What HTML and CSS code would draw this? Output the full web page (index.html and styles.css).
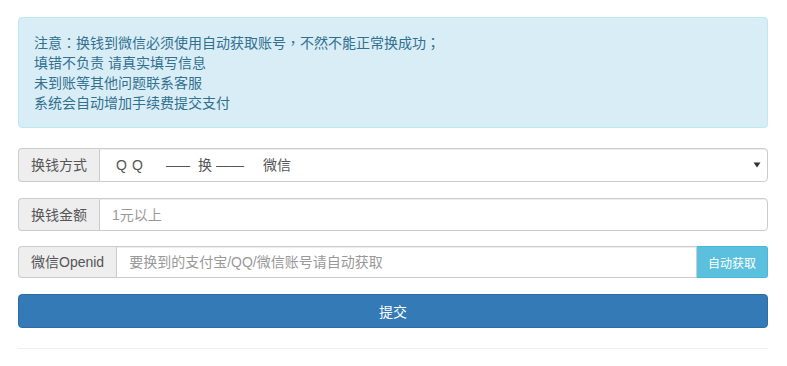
FILE: index.html
```html
<!DOCTYPE html>
<html lang="zh-CN">
<head>
<meta charset="utf-8">
<title>换钱</title>
<link rel="stylesheet" href="styles.css">
</head>
<body>
<div class="container">
  <div class="alert" lang="zh-TW">
    注意：换钱到微信必须使用自动获取账号，不然不能正常换成功；<br>
    填错不负责 请真实填写信息<br>
    未到账等其他问题联系客服<br>
    系统会自动增加手续费提交支付
  </div>

  <div class="group group-1">
    <span class="addon">换钱方式</span>
    <div class="control select">
      <span class="opt opt-qq">QQ</span>
      <span class="opt opt-dash">——</span>
      <span class="opt opt-huan">换</span>
      <span class="opt opt-dash2">——</span>
      <span class="opt opt-wx">微信</span>
      <svg class="caret" width="8" height="6" viewBox="0 0 8 6"><path d="M0.5 0.5 L7.5 0.5 L4 5.5 Z" fill="#333"/></svg>
    </div>
  </div>

  <div class="group group-2">
    <span class="addon">换钱金额</span>
    <input class="control" type="text" placeholder="1元以上">
  </div>

  <div class="group group-3">
    <span class="addon">微信Openid</span>
    <input class="control" type="text" placeholder="要换到的支付宝/QQ/微信账号请自动获取">
    <button class="btn-info" type="button">自动获取</button>
  </div>

  <button class="btn-primary" type="button">提交</button>

  <div class="rule"></div>
</div>
</body>
</html>
```

FILE: styles.css
```css
* { box-sizing: border-box; }

html, body {
  margin: 0;
  padding: 0;
  background: #fff;
}

body {
  font-family: "Liberation Sans", "Noto Sans CJK SC", sans-serif;
  font-size: 14px;
  line-height: 20px;
  color: #333;
}

.container {
  width: 750px;
  margin-left: 18px;
  padding-top: 17px;
}

.alert {
  background: #d9edf7;
  border: 1px solid #bce8f1;
  border-radius: 4px;
  color: #31708f;
  padding: 15px 15px 14px;
  margin-bottom: 20px;
  font-family: "Liberation Sans", "Noto Sans CJK TC", sans-serif;
}

.group {
  display: flex;
  align-items: stretch;
  height: 34px;
  margin-bottom: 16px;
}

.group-2 { height: 33px; margin-bottom: 15px; }
.group-3 { height: 32px; margin-bottom: 16px; }

.addon {
  display: flex;
  align-items: center;
  padding: 0 12px;
  background: #eee;
  border: 1px solid #ccc;
  border-right: 0;
  border-radius: 4px 0 0 4px;
  color: #555;
  font-size: 14px;
  white-space: nowrap;
}

.control {
  flex: 1;
  min-width: 0;
  border: 1px solid #ccc;
  border-radius: 0 4px 4px 0;
  padding: 0 12px;
  font-family: inherit;
  font-size: 14px;
  color: #555;
  background: #fff;
  box-shadow: inset 0 1px 1px rgba(0,0,0,.075);
  outline: none;
}

.control::placeholder { color: #999; }

.select {
  display: flex;
  align-items: center;
  position: relative;
  padding-left: 16px;
}

.opt {
  display: inline-block;
  white-space: nowrap;
  overflow: hidden;
}

.opt-qq { width: 50px; letter-spacing: 5px; }
.opt-dash { width: 32px; letter-spacing: -4px; }
.opt-huan { width: 18px; }
.opt-dash2 { width: 47px; }
.opt-wx { width: 40px; }

.caret {
  position: absolute;
  right: 6px;
  top: 13px;
}

.group-3 .control { border-radius: 0; }

.btn-info {
  background: #5bc0de;
  border: 1px solid #46b8da;
  border-left: 0;
  color: #fff;
  font-family: inherit;
  font-size: 12px;
  padding: 0 11px;
  border-radius: 0 3px 3px 0;
}

.btn-primary {
  display: block;
  width: 100%;
  height: 34px;
  background: #337ab7;
  border: 1px solid #2e6da4;
  border-radius: 4px;
  color: #fff;
  font-family: inherit;
  font-size: 14px;
  padding: 0;
}

.rule {
  margin-top: 20px;
  border-top: 1px solid #eee;
}
```
